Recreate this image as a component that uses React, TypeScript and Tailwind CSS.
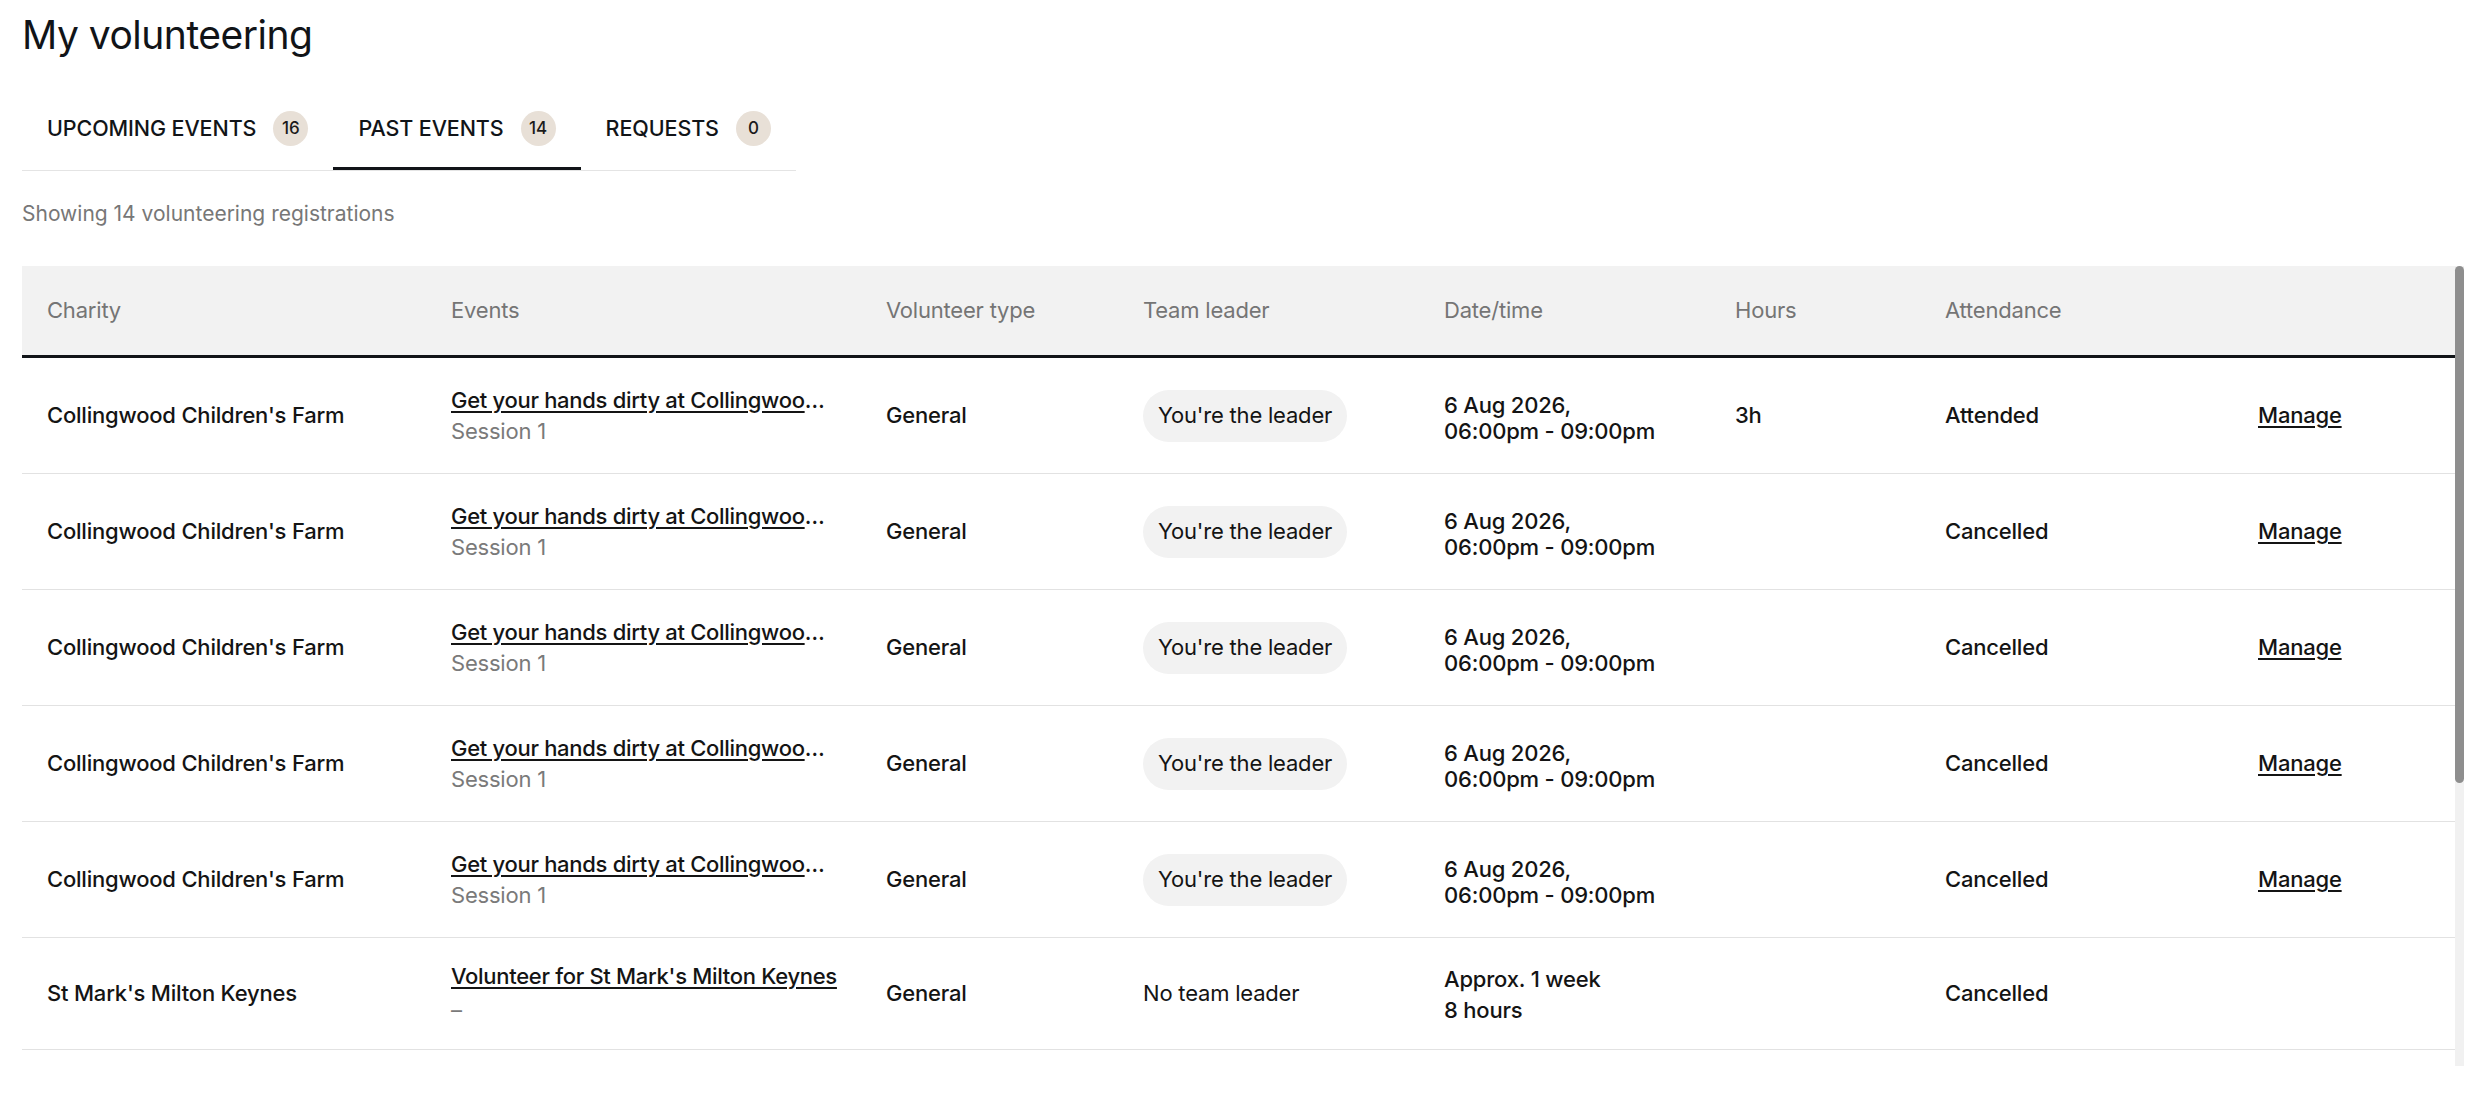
import React from "react";

type Registration = {
  charity: string;
  event: string;
  session: string;
  leader: "self" | "none";
  date: [string, string];
  hours: string;
  attendance: string;
  manage: boolean;
};

const tabs = [
  { label: "UPCOMING EVENTS", count: 16, active: false },
  { label: "PAST EVENTS", count: 14, active: true },
  { label: "REQUESTS", count: 0, active: false },
];

const farmRow = (attendance: string, hours = ""): Registration => ({
  charity: "Collingwood Children's Farm",
  event: "Get your hands dirty at Collingwood Children's Farm",
  session: "Session 1",
  leader: "self",
  date: ["6 Aug 2026,", "06:00pm - 09:00pm"],
  hours,
  attendance,
  manage: true,
});

const rows: Registration[] = [
  farmRow("Attended", "3h"),
  farmRow("Cancelled"),
  farmRow("Cancelled"),
  farmRow("Cancelled"),
  farmRow("Cancelled"),
  {
    charity: "St Mark's Milton Keynes",
    event: "Volunteer for St Mark's Milton Keynes",
    session: "–",
    leader: "none",
    date: ["Approx. 1 week", "8 hours"],
    hours: "",
    attendance: "Cancelled",
    manage: false,
  },
];

const columns = ["Charity", "Events", "Volunteer type", "Team leader", "Date/time", "Hours", "Attendance", ""];

const grid = "grid grid-cols-[404px_435px_257px_301px_291px_210px_313px_1fr] items-center pl-[25px]";

function Tabs() {
  return (
    <div className="mt-[31px] flex w-fit border-b border-[#e4e4e4]">
      {tabs.map((tab) => (
        <div
          key={tab.label}
          className={
            "flex h-[80px] items-center gap-[17px] whitespace-nowrap border-b-[3px] px-[25px] " +
            (tab.active ? "border-[#111418]" : "border-transparent")
          }
        >
          <span className="text-[21.5px] font-medium tracking-[-0.1px] text-[#111418]">{tab.label}</span>
          <span className="flex h-[35px] w-[35px] items-center justify-center rounded-full bg-[#e8e0d7] text-[17px] font-medium text-[#1b1b1b]">
            {tab.count}
          </span>
        </div>
      ))}
    </div>
  );
}

function Row({ row, last }: { row: Registration; last: boolean }) {
  return (
    <div className={grid + " border-b border-[#e2e2e2] text-[22px] font-medium tracking-[-0.2px] text-[#141414] " + (last ? "h-[112px]" : "h-[116px]")}>
      <div>{row.charity}</div>
      <div className={"flex min-w-0 flex-col " + (last ? "gap-[3px]" : "")}>
        <span className="block max-w-[386px] truncate leading-[31px] tracking-[-0.3px] underline underline-offset-[3px]">{row.event}</span>
        <span className="leading-[31px] font-normal text-[#7a7a7a]">{row.session}</span>
      </div>
      <div>General</div>
      <div>
        {row.leader === "self" ? (
          <span className="inline-flex h-[52px] items-center rounded-full bg-[#f2f2f2] px-[15px] font-normal">
            You're the leader
          </span>
        ) : (
          <span className="font-normal">No team leader</span>
        )}
      </div>
      <div className={"flex flex-col " + (last ? "leading-[31px] pt-[2px]" : "leading-[26px] pt-[4px]")}>
        <span>{row.date[0]}</span>
        <span>{row.date[1]}</span>
      </div>
      <div>{row.hours}</div>
      <div>{row.attendance}</div>
      <div>{row.manage ? <span className="underline underline-offset-[3px]">Manage</span> : null}</div>
    </div>
  );
}

export default function App() {
  return (
    <div className="min-h-screen bg-white pl-[22px] font-['Inter','Liberation_Sans',sans-serif] text-[#141414]">
      <h1 className="pt-[11px] text-[39px] leading-[48px] font-normal tracking-[-0.5px] text-[#111418]">My volunteering</h1>
      <Tabs />
      <p className="mt-[28px] text-[21px] leading-[30px] text-[#777777]">Showing 14 volunteering registrations</p>
      <div className="mt-[37px] flex h-[800px] overflow-hidden pr-[14px]">
        <div className="flex-1">
          <div className={grid + " h-[92px] border-b-[3px] border-[#111418] bg-[#f2f2f2] text-[22px] tracking-[-0.2px] text-[#757575]"}>
            {columns.map((c, i) => (
              <div key={i}>{c}</div>
            ))}
          </div>
          {rows.map((row, i) => (
            <Row key={i} row={row} last={i === rows.length - 1} />
          ))}
        </div>
        <div className="flex w-[9px] flex-col bg-[#f1f1f1]">
          <div className="h-[517px] rounded-full bg-[#8e8e8e]" />
        </div>
      </div>
    </div>
  );
}
